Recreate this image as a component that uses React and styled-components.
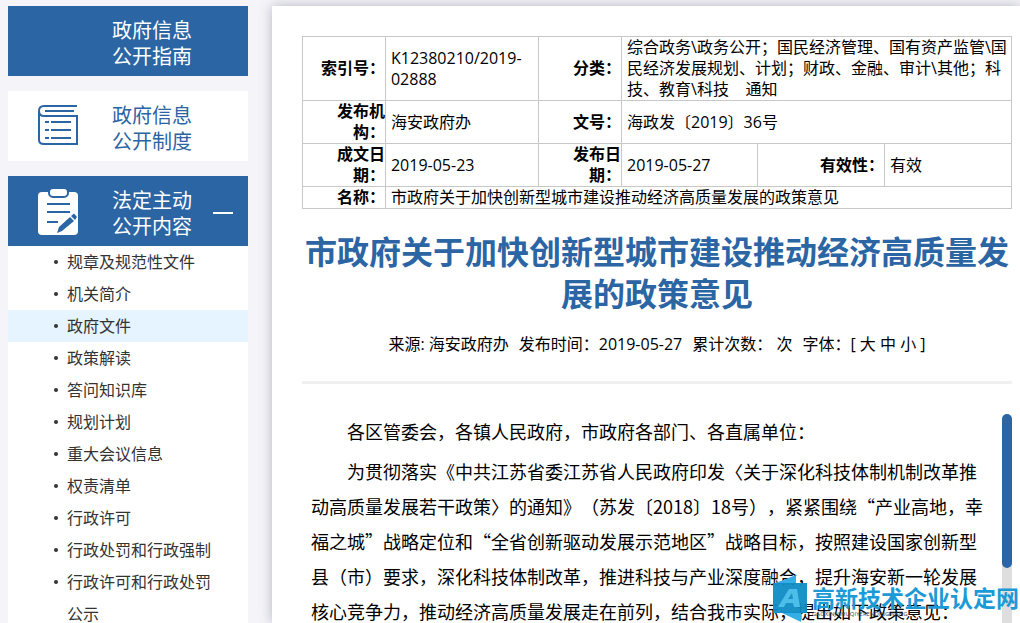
import React, { useState } from "react";
import styled, { createGlobalStyle } from "styled-components";

const GlobalStyle = createGlobalStyle`
    * {
        box-sizing: border-box;
    }
    body {
        margin: 0;
        background-color: #f5f5f9;
        color: #000;
        font-family: "Open Sans", "Noto Sans CJK SC", sans-serif;
        font-size: 16px;
        text-spacing-trim: space-all;
    }
    a {
        color: inherit;
        text-decoration: none;
    }
`;

const Page = styled.div`
    position: relative;
    display: flex;
    gap: 24px;
    height: 100vh;
    padding: 6px 0 0 8px;
    overflow: hidden;
`;

const Sidebar = styled.nav`
    display: flex;
    flex-direction: column;
    flex: 0 0 240px;
    gap: 15px;
`;

const MenuButton = styled.button`
    display: flex;
    align-items: center;
    flex-shrink: 0;
    width: 100%;
    height: 70px;
    padding: 0 15px 0 30px;
    border: none;
    background-color: ${(props) => (props.$filled ? "#2c65a4" : "#fff")};
    color: ${(props) => (props.$filled ? "#fff" : "#2c65a4")};
    font-family: inherit;
    font-size: 20px;
    line-height: 26px;
    text-align: left;
    cursor: pointer;
`;

const MenuIcon = styled.span`
    display: flex;
    flex: 0 0 74px;
`;

const MenuLabel = styled.span`
    flex: 1;
    padding-top: 5px;
    white-space: pre-line;
`;

const Minus = styled.span`
    width: 20px;
    height: 2px;
    margin-top: 4px;
    background-color: #fff;
`;

const SubMenu = styled.ul`
    margin: 0;
    padding: 0;
    list-style: none;
    background-color: #fff;
`;

const SubItem = styled.li`
    display: flex;
    gap: 9px;
    padding: 0 24px 0 46px;
    background-color: ${(props) => (props.$active ? "#e5f4ff" : "#fff")};
    color: #333;
    line-height: 32px;
    &::before {
        content: "";
        flex: 0 0 4px;
        height: 4px;
        margin-top: 14px;
        border-radius: 50%;
        background-color: #333;
    }
`;

const Panel = styled.main`
    flex: 1;
    min-width: 0;
    padding: 30px 8px 0 30px;
    background-color: #fff;
    box-shadow: 0 0 12px rgba(60, 60, 90, 0.35);
`;

const InfoTable = styled.table`
    width: 100%;
    table-layout: fixed;
    border-collapse: collapse;
    line-height: 21px;
    th,
    td {
        padding: 0;
        border: 1px solid #c8c8c8;
    }
    th {
        text-align: right;
        font-weight: bold;
    }
    th.indent {
        padding-left: 30px;
    }
    td {
        padding-left: 5px;
        text-align: left;
    }
`;

const Col = styled.col`
    width: ${(props) => props.$width}%;
`;

const Title = styled.h1`
    margin: 22px 0 0;
    color: #2c65a4;
    font-size: 32px;
    font-weight: bold;
    line-height: 42px;
    text-align: center;
`;

const Meta = styled.div`
    display: flex;
    justify-content: center;
    gap: 10px;
    padding: 16px 0 24px;
    border-bottom: 3px solid #f0f0f0;
    line-height: 26px;
`;

const Article = styled.div`
    display: flex;
    margin-top: 30px;
    height: 600px;
`;

//the quotes have to be full width here, so the Chinese font comes first
const ArticleText = styled.div`
    flex: 1;
    padding: 0 11px 0 9px;
    font-family: "Noto Sans CJK SC", sans-serif;
    font-size: 18px;
    line-height: 35px;
    p {
        margin: 0 0 5px;
        text-indent: 2em;
    }
`;

const Track = styled.div`
    width: 10px;
    border-radius: 5px;
    background-color: #dedede;
`;

const Thumb = styled.div`
    height: 154px;
    border-radius: 5px;
    background-color: #2c65a4;
`;

const Watermark = styled.div`
    position: absolute;
    right: 0;
    bottom: 0;
    display: flex;
    align-items: flex-start;
    gap: 4px;
    padding-right: 1px;
    color: #1c9ad6;
`;

const WatermarkName = styled.div`
    padding-top: 10px;
    font-size: 23px;
    font-weight: bold;
    line-height: 26px;
    white-space: nowrap;
`;

const WatermarkPinyin = styled.div`
    color: #444;
    font-size: 6px;
    font-weight: normal;
    line-height: 6px;
`;

const BookIcon = () => (
    <svg width="42" height="42" viewBox="0 0 42 42" fill="none" stroke="#2c65a4" strokeWidth="2">
        <path d="M39 1H6C3 1 1 3 1 6V35Q1 39 6 39H39V11H6C3 11 1 9 1 6" />
        <path d="M7 6H36M7 17H11M13 17H33M7 25H11M13 25H33M7 33H11M13 33H33" />
    </svg>
);

const ClipboardIcon = () => (
    <svg width="42" height="48" viewBox="0 -3 42 48" fill="none">
        <rect x="0" y="2" width="40" height="43" rx="4" fill="#fff" />
        <rect x="11" y="-2" width="19" height="9" rx="4" fill="#fff" stroke="#2c65a4" strokeWidth="2" />
        <path d="M9 14H32M9 22H32M9 32H20" stroke="#2c65a4" strokeWidth="2" />
        <path d="M19 43L21 37L32 27L36 31L24 41ZM33 26L36 23.500L39 27L37 30Z" fill="#2c65a4" />
    </svg>
);

const WatermarkLogo = () => (
    <svg width="36" height="48" viewBox="0 0 36 48">
        <path d="M1 9L24 0V9ZM8 37H29V47Z" fill="#35aee6" />
        <rect x="1" y="8" width="34" height="30" fill="#0f8cc4" fillOpacity="0.95" />
        <path d="M6 32L17 14H25L28 32H22L21 28H14L12 32ZM16 24H21L20 18Z" fill="#4dbdea" />
    </svg>
);

const subItems = [
    "规章及规范性文件",
    "机关简介",
    "政府文件",
    "政策解读",
    "答问知识库",
    "规划计划",
    "重大会议信息",
    "权责清单",
    "行政许可",
    "行政处罚和行政强制",
    "行政许可和行政处罚公示",
];

const columns = [11.7, 21.6, 11.7, 19.2, 17.9, 17.9];

function App() {
    //the selected entry of the sub menu, and whether the sub menu is open
    const [active, setActive] = useState("政府文件");
    const [open, setOpen] = useState(true);

    return (
        <Page>
            <GlobalStyle />
            <Sidebar>
                <MenuButton $filled>
                    <MenuIcon />
                    <MenuLabel>{"政府信息\n公开指南"}</MenuLabel>
                </MenuButton>
                <MenuButton>
                    <MenuIcon>
                        <BookIcon />
                    </MenuIcon>
                    <MenuLabel>{"政府信息\n公开制度"}</MenuLabel>
                </MenuButton>
                <div>
                    <MenuButton $filled onClick={() => setOpen(!open)}>
                        <MenuIcon>
                            <ClipboardIcon />
                        </MenuIcon>
                        <MenuLabel>{"法定主动\n公开内容"}</MenuLabel>
                        <Minus />
                    </MenuButton>
                    {open && (
                        <SubMenu>
                            {subItems.map((item) => (
                                <SubItem key={item} $active={item === active}>
                                    <a href="#" onClick={() => setActive(item)}>
                                        {item}
                                    </a>
                                </SubItem>
                            ))}
                        </SubMenu>
                    )}
                </div>
            </Sidebar>
            <Panel>
                <InfoTable>
                    <colgroup>
                        {columns.map((width, i) => (
                            <Col key={i} $width={width} />
                        ))}
                    </colgroup>
                    <tbody>
                        <tr>
                            <th>索引号：</th>
                            <td>K12380210/2019-02888</td>
                            <th>分类：</th>
                            <td colSpan="3">
                                综合政务\政务公开；国民经济管理、国有资产监管\国民经济发展规划、计划；财政、金融、审计\其他；科技、教育\科技&nbsp;&nbsp;&nbsp;
                                通知
                            </td>
                        </tr>
                        <tr>
                            <th className="indent">发布机构：</th>
                            <td>海安政府办</td>
                            <th>文号：</th>
                            <td colSpan="3">海政发〔2019〕36号</td>
                        </tr>
                        <tr>
                            <th className="indent">成文日期：</th>
                            <td>2019-05-23</td>
                            <th className="indent">发布日期：</th>
                            <td>2019-05-27</td>
                            <th>有效性：</th>
                            <td>有效</td>
                        </tr>
                        <tr>
                            <th>名称：</th>
                            <td colSpan="5">市政府关于加快创新型城市建设推动经济高质量发展的政策意见</td>
                        </tr>
                    </tbody>
                </InfoTable>
                <Title>市政府关于加快创新型城市建设推动经济高质量发展的政策意见</Title>
                <Meta>
                    <span>来源: 海安政府办</span>
                    <span>发布时间：2019-05-27</span>
                    <span>累计次数： 次</span>
                    <span>
                        字体：[ <a href="#">大</a> <a href="#">中</a> <a href="#">小</a> ]
                    </span>
                </Meta>
                <Article>
                    <ArticleText>
                        <p>各区管委会，各镇人民政府，市政府各部门、各直属单位：</p>
                        <p>
                            为贯彻落实《中共江苏省委江苏省人民政府印发〈关于深化科技体制机制改革推动高质量发展若干政策〉的通知》（苏发〔2018〕18号），紧紧围绕“产业高地，幸福之城”战略定位和“全省创新驱动发展示范地区”战略目标，按照建设国家创新型县（市）要求，深化科技体制改革，推进科技与产业深度融合，提升海安新一轮发展核心竞争力，推动经济高质量发展走在前列，结合我市实际，提出如下政策意见：
                        </p>
                    </ArticleText>
                    <Track>
                        <Thumb />
                    </Track>
                </Article>
            </Panel>
            <Watermark>
                <WatermarkLogo />
                <WatermarkName>
                    高新技术企业认定网
                    <WatermarkPinyin>GAOXINJISHUQIYERENDINGWANG</WatermarkPinyin>
                </WatermarkName>
            </Watermark>
        </Page>
    );
}

export default App;
